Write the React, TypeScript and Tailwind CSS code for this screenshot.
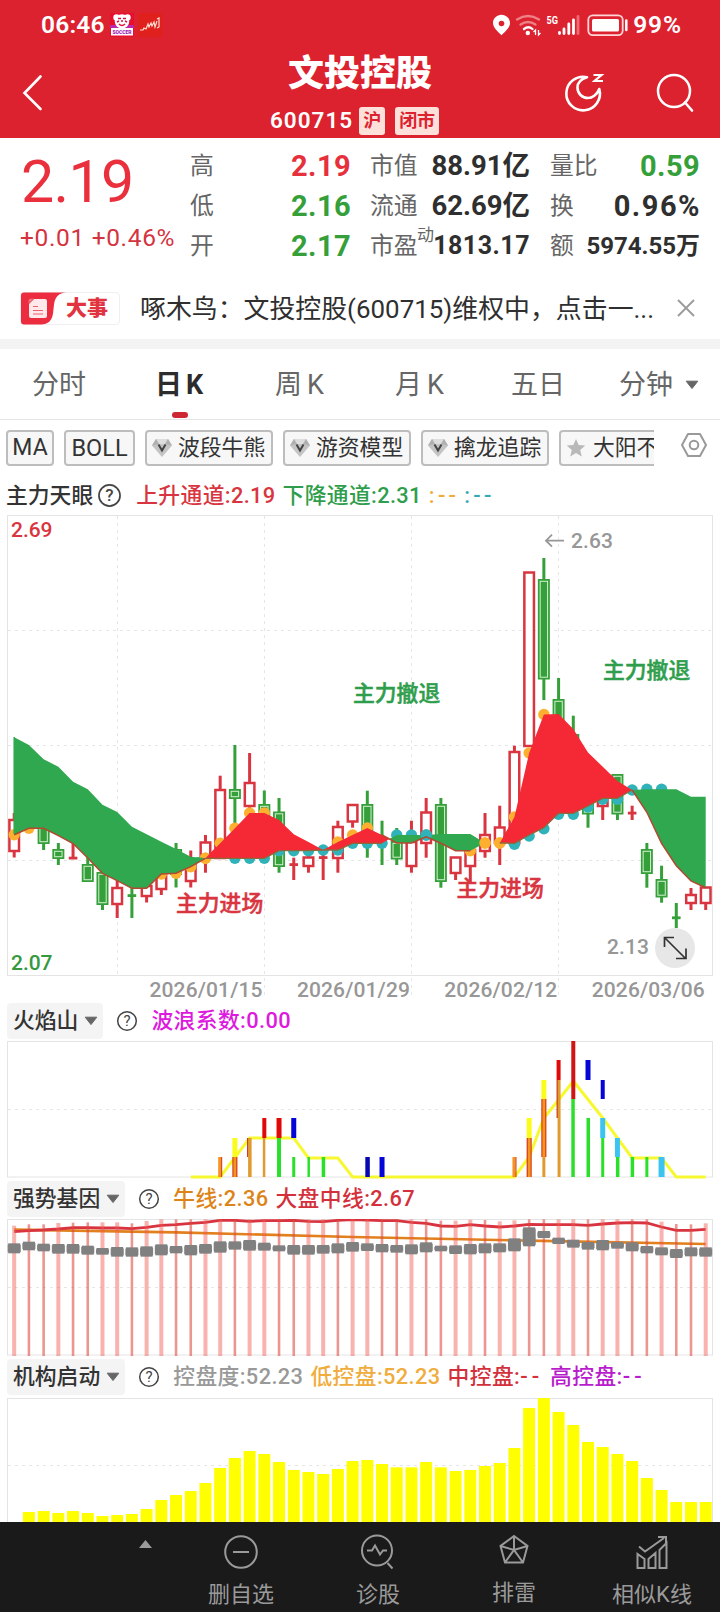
import { ReactNode } from "react";
import clsx from "clsx";

const STEP = 14.713;
const cx = (i: number) => 14.2 + STEP * i;

const RED = "#d93540";
const GREEN = "#35a03a";

// [index, up, high, bodyTop, bodyBottom, low]
const CANDLES: [number, boolean, number, number, number, number][] = [
  [0, true, 813, 820, 851, 857.5],
  [2, false, 815, 822, 843, 850],
  [3, false, 843, 850, 858, 865],
  [4, true, 843, 858, 858, 859],
  [5, false, 855, 865, 881, 881],
  [6, false, 870, 873, 904, 910],
  [7, true, 880, 888, 904, 918],
  [8, false, 887, 895.5, 895.5, 918],
  [9, true, 880, 886, 896, 902.5],
  [10, true, 870, 872, 889, 895],
  [11, false, 843, 850, 874, 887.5],
  [12, true, 850.5, 860, 881, 887.5],
  [13, true, 835, 842.5, 858, 872.7],
  [14, true, 775.7, 790, 858, 858],
  [15, false, 745, 790, 798, 830],
  [16, true, 753, 783, 806, 812],
  [17, false, 790.5, 805, 830, 840],
  [18, false, 798, 812.5, 866, 872.7],
  [19, true, 857.7, 864.5, 864.5, 880],
  [20, true, 853, 857.5, 866, 872.7],
  [21, true, 850, 857.5, 857.5, 880],
  [22, true, 820.7, 827, 858, 872.7],
  [23, true, 804, 805, 821.5, 827.7],
  [24, false, 790.7, 805, 843, 857.7],
  [25, false, 820.7, 843, 843, 865],
  [26, false, 828, 842, 858.5, 865],
  [27, true, 820.7, 842, 866, 872.7],
  [28, true, 798, 812.5, 843, 857.7],
  [29, false, 798, 805, 881, 887.7],
  [30, true, 857, 857.5, 873, 880],
  [31, true, 850, 850, 866, 884],
  [32, true, 813, 835, 851, 857.7],
  [33, true, 805.7, 827.5, 843, 865],
  [34, true, 745.7, 752, 843, 843],
  [35, true, 572, 572.5, 746, 746],
  [36, false, 558, 580, 678.5, 700],
  [37, false, 678, 700, 730, 730],
  [38, false, 715.7, 735, 760, 760],
  [39, false, 790, 795, 813.5, 827.7],
  [40, true, 790, 798, 806, 820],
  [41, false, 774, 775, 813.5, 820],
  [42, true, 805.7, 813, 813, 820],
  [43, false, 843, 850, 873, 887.7],
  [44, false, 865.7, 880, 896.5, 902.7],
  [45, false, 903, 917.7, 917.7, 928],
  [46, true, 888, 895, 903, 910],
  [47, true, 887, 887.5, 903, 910],
];

const FAST = [
  834.7, 828.3, 828.3, 835.7, 843.5, 858, 873.3, 880.7, 888.3, 888.3, 874, 873.3, 866.7, 858.3, 843.3, 828.3,
  813, 813, 820, 834.3, 842, 850, 842, 835, 828, 835, 843, 843, 836.7, 843.3, 850.7, 850.7, 843, 843, 817, 753,
  714.5, 714, 729, 752.5, 766.7, 781, 790, 812.3, 843.3, 865.7, 881, 887.7,
];
const SLOW = [
  737.3, 745, 759.3, 766.7, 781.7, 789.3, 804.7, 812, 826.7, 834.3, 841.7, 849, 856.7, 858.3, 858.3, 858.3,
  858.3, 858.3, 850.7, 850.7, 850.7, 850, 850, 843.3, 843.3, 843.3, 835, 835, 835, 834, 834, 834, 843, 843, 843.3,
  835, 827.7, 813.3, 813.3, 806, 798.3, 798.3, 790, 789.3, 789.3, 789.3, 796.7, 796.7,
];

const ORANGE_DOTS = [0, 1, 10, 11, 12, 13, 14, 15, 16, 17, 22, 23, 24, 31, 32, 33, 34, 35, 36];
const TEAL_DOTS = [15, 16, 17, 18, 19, 20, 21, 22, 23, 24, 25, 26, 27, 28, 34, 35, 36, 37, 38, 39, 40, 41, 42, 43, 44];

const line = (ys: number[], from = 0) => ys.map((y, i) => `${cx(i + from)},${y}`).join(" ");

function band(from: number, to: number) {
  const top = FAST.slice(from, to + 1).map((y, i) => `${cx(i + from)},${y}`);
  const bottom = SLOW.slice(from, to + 1).map((y, i) => `${cx(i + from)},${y}`).reverse();
  return [...top, ...bottom].join(" ");
}

// the two lines cross a little after candle 25
const CROSS = `${cx(25.5)},839`;

function Candle({ i, up, high, top, bottom, low }: { i: number; up: boolean; high: number; top: number; bottom: number; low: number }) {
  const x = cx(i);
  const color = up ? RED : GREEN;
  if (bottom - top < 2) {
    return (
      <g fill={color}>
        <rect x={x - 1.5} y={high} width={3} height={low - high} />
        <rect x={x - 4.3} y={top - 1.3} width={8.6} height={2.8} />
      </g>
    );
  }
  return (
    <g>
      <rect x={x - 1.5} y={high} width={3} height={top - high} fill={color} />
      <rect x={x - 1.5} y={bottom} width={3} height={Math.max(low - bottom, 0)} fill={color} />
      {up ? (
        <rect x={x - 4.8} y={top} width={9.6} height={bottom - top} fill="#fff" stroke={color} strokeWidth={2.5} />
      ) : (
        <>
          <rect x={x - 6} y={top - 1} width={12} height={bottom - top + 2} fill={color} />
          <rect x={x - 3.7} y={top + 1.3} width={7.4} height={bottom - top - 2.6} fill="none" stroke="#d5efd3" strokeWidth={1} />
        </>
      )}
    </g>
  );
}

function Frame({ y, h, dash }: { y: number; h: number; dash: number[] }) {
  return (
    <>
      <rect x={7.5} y={y} width={705} height={h} fill="none" stroke="#e4e4e4" />
      {dash.map((d) => (
        <line key={d} x1={8} x2={712} y1={d} y2={d} stroke="#e6e6e6" strokeDasharray="3 4" />
      ))}
    </>
  );
}

function MainChart() {
  return (
    <svg className="block" width="720" height="486" viewBox="0 515 720 486">
      <Frame y={515.5} h={460} dash={[630.5, 745.5, 860.5]} />
      {[117.5, 264.5, 411.5, 558.5].map((x, i) => (
        <line key={x} x1={x} x2={x} y1={516} y2={i ? 999 : 975} stroke="#e6e6e6" strokeDasharray="3 4" />
      ))}
      {CANDLES.map(([i, up, high, top, bottom, low]) => (
        <Candle key={i} i={i} up={up} high={high} top={top} bottom={bottom} low={low} />
      ))}
      {ORANGE_DOTS.map((i) => (
        <circle key={i} cx={cx(i)} cy={FAST[i]} r={5.7} fill="#fdb02f" />
      ))}
      {TEAL_DOTS.map((i) => (
        <circle key={i} cx={cx(i)} cy={i > 33 && i < 42 ? SLOW[i] + 1 : SLOW[i]} r={5.7} fill="#2fb2b8" />
      ))}
      <g fill="#2fa84f">
        <polygon points={band(0, 13)} />
        <polygon points={`${CROSS} ${band(26, 32)}`} />
        <polygon points={band(42, 47)} />
      </g>
      <g fill="#f52936">
        <polygon points={band(13, 21)} />
        <polygon points={band(21, 25)} />
        <polygon points={`${cx(25)},${FAST[25]} ${CROSS} ${cx(25)},${SLOW[25]}`} />
        <polygon points={band(33, 42)} />
      </g>
      <circle cx={cx(13)} cy={858.3} r={5.7} fill="#fdb02f" />
      <polygon points={`${cx(12.4)},857 ${cx(13)},858.3 ${cx(12.4)},862`} fill="#2fa84f" />
      <polygon points={`${cx(13)},858.3 ${cx(13.6)},849 ${cx(13.6)},858.3`} fill="#f52936" />
      <circle cx={cx(28)} cy={SLOW[28]} r={5.7} fill="#2fb2b8" />
      <circle cx={cx(32)} cy={843} r={5.7} fill="#fdb02f" />
      <circle cx={cx(33)} cy={843} r={5.7} fill="#fdb02f" />
      <polygon points={`${cx(33)},843 ${cx(33.5)},831 ${cx(33.5)},843`} fill="#f52936" />
      <polyline points={line(SLOW.slice(13, 26), 13)} fill="none" stroke="#8d6a3c" strokeWidth={1.3} />
      <polyline points={line(SLOW.slice(33, 43), 33)} fill="none" stroke="#8d6a3c" strokeWidth={1.3} />
      <polyline points={line(FAST.slice(0, 14))} fill="none" stroke="#b04a30" strokeWidth={1.5} />
      <polyline points={line(FAST.slice(25, 32), 25)} fill="none" stroke="#b04a30" strokeWidth={1.5} />
      <polyline points={line(FAST.slice(42), 42)} fill="none" stroke="#b04a30" strokeWidth={1.5} />
      <path d="M14.2 737v97" stroke="#2fa84f" strokeWidth={1.5} />

      <g fontFamily="Noto Sans CJK SC, sans-serif" fontSize={21.8} fontWeight={500} strokeWidth={0.5}>
        <text x={176} y={911} fill={RED} stroke={RED}>主力进场</text>
        <text x={456.5} y={896} fill={RED} stroke={RED}>主力进场</text>
        <text x={353} y={701} fill="#2f9e4c" stroke="#2f9e4c">主力撤退</text>
        <text x={603} y={678} fill="#2f9e4c" stroke="#2f9e4c">主力撤退</text>
      </g>
      <g fontFamily="Roboto, sans-serif" fontSize={21} fontWeight={500}>
        <text x={11} y={537} fill={RED} textLength={41.5}>2.69</text>
        <text x={11} y={970} fill="#35993f" textLength={41.5}>2.07</text>
        <g fill="#979797">
          <text x={571} y={547.5} textLength={42}>2.63</text>
          <text x={607} y={954} textLength={42}>2.13</text>
          {["2026/01/15", "2026/01/29", "2026/02/12", "2026/03/06"].map((d, i) => (
            <text key={d} x={149.5 + i * 147.4} y={997} textLength={113}>{d}</text>
          ))}
        </g>
      </g>
      <path d="M564 540.7h-18m6-6-6 6 6 6" fill="none" stroke="#979797" strokeWidth={1.8} />
      <circle cx={675} cy={948} r={20} fill="#e7e7e7" />
      <path d="M664.5 947v-9.500h9.500M664.500 937.500l21 21M686 948.500v10h-10" fill="none" stroke="#333" strokeWidth={1.7} />
    </svg>
  );
}

const F = { o: "#f79420", r: "#e00808", d: "#c62a10", y: "#fcfc1c", g: "#2be02b", b: "#0505d8", c: "#3cc4f0", m: "#e09a30" };
// [index, offset, width, top, bottom, colour]
const FLAME: [number, number, number, number, number, string][] = [
  [14, -2, 3, 1157, 1177, F.o], [14, 1, 1, 1157, 1177, F.d],
  [15, -2.5, 5, 1138, 1157, F.y], [15, -2.5, 5, 1157, 1177, F.d], [15, -1.5, 3, 1157, 1177, F.o],
  [16, -2.5, 1.5, 1138, 1157, F.d], [16, -1.5, 3.5, 1138, 1177, F.m],
  [17, -2, 4, 1118, 1138, F.r], [17, -1.5, 2.5, 1138, 1177, F.m],
  [18, -2.5, 5, 1118, 1138, F.r], [18, -2, 4, 1138, 1177, F.g],
  [19, -2.5, 5, 1118, 1138, F.b], [19, -1.5, 3, 1157, 1177, F.g],
  [20, -1, 2.5, 1157, 1177, F.g], [21, -1.5, 3.5, 1157, 1177, F.g],
  [24, -2, 4.5, 1157, 1177, "#0808b0"], [25, -2.5, 5, 1157, 1177, F.b],
  [34, -2, 3, 1157, 1177, F.o], [34, 1, 1, 1157, 1177, F.d],
  [35, -2.5, 5, 1118, 1138, F.y], [35, -2.5, 5, 1138, 1177, F.d], [35, -1.5, 3, 1138, 1177, F.o],
  [36, -2.5, 5, 1080, 1099, F.y], [36, -2.5, 5, 1099, 1157, F.d], [36, -1.5, 3, 1099, 1157, F.o], [36, -1.5, 3, 1157, 1177, F.m],
  [37, -2, 4, 1060, 1080, F.r], [37, -2, 1.5, 1080, 1118, F.d], [37, -1, 3, 1080, 1177, F.m],
  [38, -2, 4, 1041, 1099, "#cf1414"], [38, -2, 3.5, 1099, 1177, F.g],
  [39, -2.5, 5, 1060, 1080, F.b], [39, -1.5, 3.5, 1118, 1177, F.g],
  [40, -2, 4, 1080, 1099, F.b], [40, -2.5, 5, 1118, 1138, F.c], [40, -1.5, 3, 1138, 1177, F.g],
  [41, -2.5, 5, 1138, 1157, F.c], [41, -1.5, 3.5, 1157, 1177, F.g],
  [42, -1.5, 3.5, 1157, 1177, F.g], [43, -1.5, 3, 1157, 1177, F.g],
  [44, -3, 6, 1157, 1177, F.c],
];
const WAVE: [number, number][] = [
  [12, 1177], [14, 1177], [16, 1138], [19, 1138], [20, 1158], [22, 1158], [23, 1177], [34, 1177], [35, 1157],
  [36, 1118], [37, 1100], [38, 1081], [40, 1118], [42, 1158], [44, 1158], [45, 1177], [47, 1177],
];

function FlameChart() {
  return (
    <svg className="block" width="720" height="138" viewBox="0 1041 720 138">
      <Frame y={1041.5} h={135.5} dash={[1109.5]} />
      <polyline points={WAVE.map(([i, y]) => `${cx(i)},${y}`).join(" ")} fill="none" stroke="#f8f832" strokeWidth={3} />
      {FLAME.map(([i, dx, w, top, bottom, fill], k) => (
        <rect key={k} x={cx(i) + dx} y={top} width={w} height={bottom - top} fill={fill} />
      ))}
    </svg>
  );
}

const WIDE = "100100110110011011001101100100110110011011001001";
const STEM_TOP = [137, 133, 133, 129, 128, 127, 127, 127, 130, 123, 118];
const STEM_TOP_RIGHT: Record<number, number> = { 29: 122, 30: 122, 31: 119, 32: 120, 33: 124, 34: 121, 44: 125, 45: 132, 46: 133, 47: 130 };
const MID = [
  155, 152, 150, 147, 143, 143, 144, 144, 146, 142, 136, 134, 130, 127, 121, 121, 124, 122, 122, 121, 124, 125, 121,
  119, 120, 122, 122, 127, 130, 138, 139, 134, 138, 141, 138, 133, 134, 134, 134, 136, 132, 129, 128, 129, 141, 151,
  151, 148,
];
const BLOCKS: [number, number][] = [
  [190, 220], [185, 211], [191, 214], [192, 221], [192, 221], [197, 224], [204, 224], [201, 230], [202, 230],
  [199, 230], [193, 226], [198, 220], [195, 226], [192, 221], [184, 218], [184, 209], [180, 212], [188, 212],
  [196, 214], [195, 224], [195, 224], [195, 221], [190, 220], [186, 215], [190, 213], [192, 217], [195, 218],
  [193, 223], [187, 217], [197, 214], [196, 222], [192, 223], [190, 220], [190, 217], [175, 214], [142, 199],
  [153, 174], [173, 192], [179, 203], [186, 209], [180, 211], [186, 206], [187, 214], [198, 220], [202, 226],
  [207, 234], [202, 229], [202, 230],
];

function GeneChart() {
  const y = (v: number) => 1180 + v / 3;
  return (
    <svg className="block" width="720" height="137" viewBox="0 1219 720 137">
      <Frame y={1219.5} h={135.5} dash={[1287.5]} />
      <polyline points={`${cx(0)},${y(149)} ${cx(11)},${y(157)} ${cx(23)},${y(171)} ${cx(35)},${y(182)} ${cx(47)},${y(192)}`} fill="none" stroke="#e2801d" strokeWidth={2.6} />
      <polyline points={MID.map((v, i) => `${cx(i)},${y(v)}`).join(" ")} fill="none" stroke="#d8333f" strokeWidth={2.8} />
      {BLOCKS.map(([top, bottom], i) => {
        const wide = WIDE[i] === "1";
        const w = wide ? 4 : 2.6;
        const stemTop = y(STEM_TOP[i] ?? STEM_TOP_RIGHT[i] ?? 118);
        return (
          <g key={i}>
            <rect x={cx(i) - w / 2} y={stemTop} width={w} height={1356 - stemTop} fill={wide ? "#f05a50" : "#dd4a42"} fillOpacity={wide ? 0.46 : 0.58} />
            <rect x={cx(i) - 6.5} y={y(top + 4)} width={13} height={(bottom - top - 8) / 3} fill="#838383" />
            <rect x={cx(i) - 6} y={y(top)} width={12} height={(bottom - top) / 3} fill="#808080" />
          </g>
        );
      })}
    </svg>
  );
}

const CONTROL = [
  396, 393, 399, 393, 399, 408, 405, 402, 387, 360, 345, 333, 309, 264, 234, 213, 222, 246, 270, 276, 282, 267, 243,
  240, 252, 262, 262, 246, 262, 273, 270, 258, 249, 204, 84, 54, 96, 135, 186, 201, 222, 243, 294, 330, 366, 366, 366,
];

function ControlChart() {
  return (
    <svg className="block" width="720" height="125" viewBox="0 1397 720 125">
      <Frame y={1398.5} h={136} dash={[1465.5]} />
      {CONTROL.map((v, k) => (
        <rect key={k} x={cx(k + 1) - 6} y={1380 + v / 3} width={12} height={150} fill="#ffff00" />
      ))}
    </svg>
  );
}

function Help({ size = 22, className }: { size?: number; className?: string }) {
  return (
    <svg className={clsx("shrink-0", className)} width={size} height={size} viewBox="0 0 22 22">
      <circle cx="11" cy="11" r="9.3" fill="none" stroke="#444" strokeWidth="1.5" />
      <text x="11" y="16.2" textAnchor="middle" fontFamily="Roboto, sans-serif" fontSize="15" fill="#444">?</text>
    </svg>
  );
}

function Caret({ className }: { className?: string }) {
  return (
    <svg className={clsx("shrink-0", className)} width="14" height="10" viewBox="0 0 14 10">
      <path d="M1.2 1.2h11.6L7 8.600z" fill="#666" stroke="#666" strokeLinejoin="round" />
    </svg>
  );
}

function PanelHeader({ name, className, children }: { name: string; className: string; children: ReactNode }) {
  return (
    <div className={clsx("flex pl-[7px]", className)}>
      <button className="flex h-9 items-center rounded bg-[#f4f4f4] pl-[6px] pr-[5px] text-[21.8px] font-medium leading-9 text-[#333]">
        {name}
        <Caret className="ml-[6px]" />
      </button>
      <Help className="ml-[13px] mt-[7px]" />
      <div className="ml-[13px] flex gap-[7px] text-[21.8px] font-medium leading-9 tracking-[0.38px]">{children}</div>
    </div>
  );
}

function Gem() {
  return (
    <svg className="shrink-0" width="22" height="20" viewBox="0 0 22 20">
      <path d="M5 1h12l4 6.500L11 19 1 7.500z" fill="#c4c4c4" />
      <path d="M5 1h12l-3 5H8z" fill="#dedede" />
      <path d="M1 7.500 5 1l3 5zM21 7.500 17 1l-3 5z" fill="#b0b0b0" />
      <path d="m7.500 6.500 3.500 6 3.500-6" fill="none" stroke="#444" strokeWidth="2" />
    </svg>
  );
}

function Chip({ label, icon, className }: { label: string; icon?: ReactNode; className: string }) {
  return (
    <button className={clsx("flex h-9 shrink-0 items-center gap-[5px] rounded-[4px] border-2 border-[#bdbdbd] bg-[#f7f7f7] leading-8 text-[#333] whitespace-nowrap", className)}>
      {icon}
      {label}
    </button>
  );
}

function StatusBar() {
  return (
    <div className="flex h-[50px] items-center pl-[41px] pr-[38px] text-white">
      <span className="text-[24.5px] font-semibold tracking-[0.2px]">06:46</span>
      <svg className="ml-[5px]" width="24" height="24" viewBox="0 0 24 24">
        <rect width="24" height="24" fill="#e60f2d" />
        <path d="M0 12h24v3H0z" fill="#c026a8" />
        <rect x="1" y="15" width="22" height="7.5" fill="#fff" />
        <circle cx="6.5" cy="4.5" r="3.2" fill="#fff" />
        <circle cx="17.5" cy="4.5" r="3.2" fill="#fff" />
        <circle cx="12" cy="8.5" r="7.2" fill="#fff" />
        <path d="M8 5.500h3M13 5.500h3M7 9l2-1M15 8l2 1M9 11q3 3 6 0M11 8h2" stroke="#e0103a" strokeWidth="1.5" fill="none" />
        <text x="12" y="21" textAnchor="middle" fontFamily="Roboto, sans-serif" fontSize="5" fontWeight="900" fill="#a020b0">SOCCER</text>
      </svg>
      <svg className="ml-[4px]" width="24" height="24" viewBox="0 0 24 24">
        <rect width="24" height="24" fill="#e0201c" />
        <path d="M2 17h3l1-2 2 1 2-5 1 3 2-4 1 3 2-4 1 5 2-6M19 6l2-1v9l-2 1" fill="none" stroke="#ffe1d8" strokeWidth="1.2" />
      </svg>
      <svg className="ml-auto" width="138" height="24" viewBox="490 12 138 24">
        <path d="M500.500 13.800c-4.700 0-8.500 3.600-8.500 8.300 0 5 5.500 9 8.500 12.200 3-3.200 8.500-7.200 8.500-12.200 0-4.700-3.800-8.300-8.500-8.300z" fill="#fff" />
        <circle cx="500.5" cy="22.5" r="2.8" fill="#dc222f" />
        <g fill="none" strokeWidth="2.3" strokeLinecap="round">
          <path d="M516 18.500q11-7 22 0" stroke="#f08088" />
          <path d="M519.500 23.500q7.500-5 15 0" stroke="#f08088" />
          <path d="M523 28q4.500-3.500 8.500 0" stroke="#fff" />
        </g>
        <circle cx="526.8" cy="32" r="2.2" fill="#fff" />
        <path d="M534.500 34v-5l-2 2M537.500 29v5l2-2" stroke="#fff" strokeWidth="1.3" fill="none" />
        <text x="545.5" y="23" fontFamily="Roboto, sans-serif" fontSize="11.5" fontWeight="700" fill="#fff" textLength="11.5" lengthAdjust="spacingAndGlyphs">5G</text>
        <g strokeWidth="2.8" strokeLinecap="round" stroke="#fff">
          <path d="M558.500 31.500v1M563 28v4.500M567.800 23v9.500M572.500 19v13.500" />
          <path d="M577 15.500v17" stroke="#ee6a74" />
        </g>
        <rect x="587.3" y="14.3" width="34.4" height="19.8" rx="4.5" fill="none" stroke="#ffd5d8" strokeWidth="1.8" />
        <rect x="591" y="18" width="27" height="12.5" rx="1.5" fill="#fff" />
        <path d="M625.300 19.500v9.500" stroke="#fff" strokeWidth="2.5" strokeLinecap="round" />
      </svg>
      <span className="ml-[4px] text-[24.5px] font-semibold tracking-[0.9px]">99%</span>
    </div>
  );
}

function TitleBar() {
  return (
    <div className="grid h-[88px] grid-cols-[200px_320px_200px] text-white">
      <svg className="ml-[22px] mt-[24px]" width="22" height="38" viewBox="0 0 22 38">
        <path d="M18.500 2.500 2.500 19l16 16" fill="none" stroke="#fff" strokeWidth="2.6" strokeLinecap="round" />
      </svg>
      <div>
        <h1 className="h-[49px] text-center text-[36px] font-black leading-[49px]">文投控股</h1>
        <div className="ml-[70px] mt-[7px] flex h-[30px] items-center">
          <span className="text-[22.5px] font-semibold tracking-[1px]">600715</span>
          <span className="ml-[6px] h-7 rounded-[3px] bg-[#fde0da] px-[4px] text-[18px] font-bold leading-[28px] text-[#dc222f]">沪</span>
          <span className="ml-[10px] h-7 rounded-[3px] bg-[#fde0da] px-[4px] text-[18px] font-bold leading-[28px] text-[#dc222f]">闭市</span>
        </div>
      </div>
      <div className="flex pl-[43px] pt-[21px]">
        <svg width="42" height="42" viewBox="563 71 42 42">
          <path d="M587 77.200A16.800 16.800 0 1 0 599.300 89C597 95 592 98 588 98c-6 0-10.500-4.500-10.500-10.500 0-4.500 3.500-8.500 9.500-10.300z" fill="none" stroke="#fff" strokeWidth="2.6" strokeLinejoin="round" />
          <path d="M593.500 75h8l-7 6h8.500" fill="none" stroke="#fff" strokeWidth="2.2" />
        </svg>
        <svg className="ml-[50px]" width="42" height="42" viewBox="655 71 42 42">
          <circle cx="674" cy="91" r="16" fill="none" stroke="#fff" strokeWidth="2.5" />
          <path d="m685 102.500 7 8" stroke="#fff" strokeWidth="2.6" strokeLinecap="round" />
        </svg>
      </div>
    </div>
  );
}

function Stat({ label, sup, value, className }: { label: string; sup?: string; value: string; className: string }) {
  return (
    <div className="flex h-10 items-center justify-between whitespace-nowrap">
      <span className="relative text-[23.8px] leading-10 text-[#666]">
        {label}
        {sup && <sup className="absolute left-[47px] -top-[11px] text-[17px] leading-10">{sup}</sup>}
      </span>
      <span className={clsx("font-bold leading-10", className)}>{value}</span>
    </div>
  );
}

function Quote() {
  return (
    <section className="flex h-[144px] pl-[20px] pt-[8px]">
      <div className="w-[170px] text-[#e9303c]">
        <div className="h-[68px] pl-[1px] text-[59px] font-[450] leading-[71px] tracking-[-0.6px]">2.19</div>
        <div className="mt-[5px] whitespace-nowrap text-[24.5px] leading-[38px] tracking-[0.65px] text-[#d4343f]">+0.01 +0.46%</div>
      </div>
      <div className="w-[161px]">
        <Stat label="高" value="2.19" className="text-[29px] tracking-[0.4px] text-[#e6303c]" />
        <Stat label="低" value="2.16" className="text-[29px] tracking-[0.4px] text-[#35a03a]" />
        <Stat label="开" value="2.17" className="text-[29px] tracking-[0.4px] text-[#35a03a]" />
      </div>
      <div className="ml-[19px] w-[160px]">
        <Stat label="市值" value="88.91亿" className="text-[27.5px] text-[#2f2f2f]" />
        <Stat label="流通" value="62.69亿" className="text-[27.5px] text-[#2f2f2f]" />
        <Stat label="市盈" sup="动" value="1813.17" className="text-[25px] tracking-[0.5px] text-[#2f2f2f]" />
      </div>
      <div className="ml-[20px] w-[150px]">
        <Stat label="量比" value="0.59" className="text-[29px] tracking-[0.4px] text-[#35a03a]" />
        <Stat label="换" value="0.96%" className="-mr-px text-[29px] tracking-[1.5px] text-[#2f2f2f]" />
        <Stat label="额" value="5974.55万" className="text-[24px] text-[#2f2f2f]" />
      </div>
    </section>
  );
}

function News() {
  return (
    <section className="flex h-[57px] items-center pb-[5px] pl-[20px]">
      <div className="flex h-[33px] w-[100px] shrink-0 items-center rounded-[4px] border border-[#f0f0f0]">
        <svg className="-ml-px shrink-0" width="47" height="33" viewBox="0 0 47 33">
          <path d="M4 0.500h43c-9 0-12 5-13 12l-1 9c-1 7-5 11-12 11H4q-3 0-3-3v-26q0-3 3-3z" fill="#ec2c3f" />
          <path d="M14 7h11q2 0 2 2v15q0 2-2 2H11q-2 0-2-2V12z" fill="#ffe9ea" />
          <path d="M9 10.500V9q0-2 2-2h2zM13 14.500h5M13 18.500h10M13 22h10" fill="#ffe9ea" stroke="#f0606c" strokeWidth="1.2" />
        </svg>
        <span className="-ml-px text-[21px] font-black leading-8 text-[#e23340]">大事</span>
      </div>
      <p className="ml-[20px] w-[514px] whitespace-nowrap pt-[1px] text-[25.9px] leading-[40px] text-[#2f2f2f]">
        啄木鸟：文投控股(600715)维权中，点击一...
      </p>
      <svg className="ml-[23px]" width="18" height="18" viewBox="0 0 18 18">
        <path d="m1 1 16 16M17 1 1 17" stroke="#9a9a9a" strokeWidth="1.8" />
      </svg>
    </section>
  );
}

function Tabs() {
  return (
    <nav className="flex h-[71px] items-start border-b border-[#e4e4e4] text-[27px] leading-[73px] text-[#666]">
      <span className="ml-[32px] w-[123px]">分时</span>
      <span className="relative h-[70px] w-[120px] font-bold text-[#2c2c2c]">
        日<span className="ml-[4px]">K</span>
        <i className="absolute bottom-[1px] left-[17px] h-[6px] w-4 rounded-[3px] bg-[#cc2733]" />
      </span>
      <span className="w-[120px]">周<span className="ml-[5px]">K</span></span>
      <span className="w-[116px]">月<span className="ml-[5px]">K</span></span>
      <span className="w-[108px]">五日</span>
      <span>分钟</span>
      <Caret className="ml-[12px] mt-[31px]" />
    </nav>
  );
}

function Chips() {
  return (
    <div className="flex h-[58px] pl-[6px] pt-[10px]">
      <div className="flex w-[648px] gap-[10px] overflow-hidden text-[21.8px]">
        <Chip label="MA" className="w-[48px] justify-center text-[23px]" />
        <Chip label="BOLL" className="w-[71px] justify-center text-[23.5px]" />
        <Chip label="波段牛熊" icon={<Gem />} className="w-[128px] pl-[4px]" />
        <Chip label="游资模型" icon={<Gem />} className="w-[128px] pl-[4px]" />
        <Chip label="擒龙追踪" icon={<Gem />} className="w-[128px] pl-[4px]" />
        <Chip
          label="大阳不"
          className="w-[128px] pl-[5px]"
          icon={
            <svg className="mr-[2px] shrink-0" width="20" height="20" viewBox="0 0 20 20">
              <path d="m10 1 2.700 6 6.500.600-5 4.300 1.600 6.500L10 15l-5.800 3.400 1.600-6.500-5-4.300 6.500-.600z" fill="#b9b9b9" />
            </svg>
          }
        />
      </div>
      <svg className="ml-[26px] mt-[2px]" width="28" height="26" viewBox="0 0 28 26">
        <path d="M8 2h12l6 11-6 11H8L2 13z" fill="none" stroke="#999" strokeWidth="2" strokeLinejoin="round" />
        <circle cx="14" cy="13" r="4.3" fill="none" stroke="#999" strokeWidth="2" />
      </svg>
    </div>
  );
}

function BottomItem({ label, className, children }: { label: string; className: string; children: ReactNode }) {
  return (
    <button className={clsx("flex flex-col items-center text-[22px] leading-8 text-[#9a9a9a]", className)}>
      <svg width="36" height="36" viewBox="0 0 36 36" fill="none" stroke="#9a9a9a" strokeWidth="2">
        {children}
      </svg>
      <span className="mt-[9px] whitespace-nowrap">{label}</span>
    </button>
  );
}

function BottomBar() {
  return (
    <footer className="flex h-[90px] items-start bg-[#1a1a1a] pl-[138px] pt-[12px]">
      <svg className="mt-[5px]" width="15" height="10" viewBox="0 0 15 10">
        <path d="M7.500 1 14 9H1z" fill="#9a9a9a" />
      </svg>
      <BottomItem label="删自选" className="ml-[38px] w-[100px]">
        <circle cx="18" cy="18" r="15.8" />
        <path d="M10 18h16" />
      </BottomItem>
      <BottomItem label="诊股" className="ml-[37px] w-[100px]">
        <circle cx="17" cy="16.5" r="15" />
        <path d="M7 16.500h5l3-5 5 9 3-4h4M27.500 29l5 5.500" />
      </BottomItem>
      <BottomItem label="排雷" className="ml-[36px] -mt-[2px] w-[100px]">
        <path d="M18 4 31.500 14 27 30.500H9L4.500 14zM18 4v14M4.500 14 18 18l13.500-4M9 30.500 18 18l9 12.500" />
      </BottomItem>
      <BottomItem label="相似K线" className="ml-[38px] w-[100px]">
        <path d="M3.500 34V20l7 5v9zM14.500 34v-9l7-6v15zM25.500 34V16l7-7v25zM5 12.500l6 5L30 4M24 3h8v6" />
      </BottomItem>
    </footer>
  );
}

export default function App() {
  return (
    <div className="h-[1612px] w-[720px] overflow-hidden bg-white font-['Roboto','Noto_Sans_CJK_SC',sans-serif]">
      <header className="h-[138px] bg-[#dc222f]">
        <StatusBar />
        <TitleBar />
      </header>
      <Quote />
      <News />
      <div className="h-[10px] bg-[#f3f3f3]" />
      <Tabs />
      <Chips />
      <div className="flex h-[37px] items-start pl-[6px] text-[21.8px] font-medium leading-9 text-[#333]">
        <span>主力天眼</span>
        <Help size={25} className="ml-[4px] mt-[5px]" />
        <span className="ml-[14px] tracking-[0.35px] text-[#d93540]">上升通道:2.19</span>
        <span className="ml-[7px] tracking-[0.35px] text-[#2f9e4c]">下降通道:2.31</span>
        <span className="ml-[7px] tracking-[3.3px] text-[#f0ab3c]">:--</span>
        <span className="ml-[5px] tracking-[3.3px] text-[#35aab5]">:--</span>
      </div>
      <MainChart />
      <PanelHeader name="火焰山" className="h-10 pt-[2px]">
        <span className="text-[#dd1add]">波浪系数:0.00</span>
      </PanelHeader>
      <FlameChart />
      <PanelHeader name="强势基因" className="h-10 pt-[2px]">
        <span className="text-[#dd8418]">牛线:2.36</span>
        <span className="text-[#d3303c]">大盘中线:2.67</span>
      </PanelHeader>
      <GeneChart />
      <PanelHeader name="机构启动" className="h-[41px] pt-[3px]">
        <span className="text-[#999]">控盘度:52.23</span>
        <span className="text-[#f0ac3c]">低控盘:52.23</span>
        <span className="text-[#d3303c]">中控盘:<span className="tracking-[4px]">--</span></span>
        <span className="text-[#b81ccc]">高控盘:<span className="tracking-[4px]">--</span></span>
      </PanelHeader>
      <ControlChart />
      <BottomBar />
    </div>
  );
}
